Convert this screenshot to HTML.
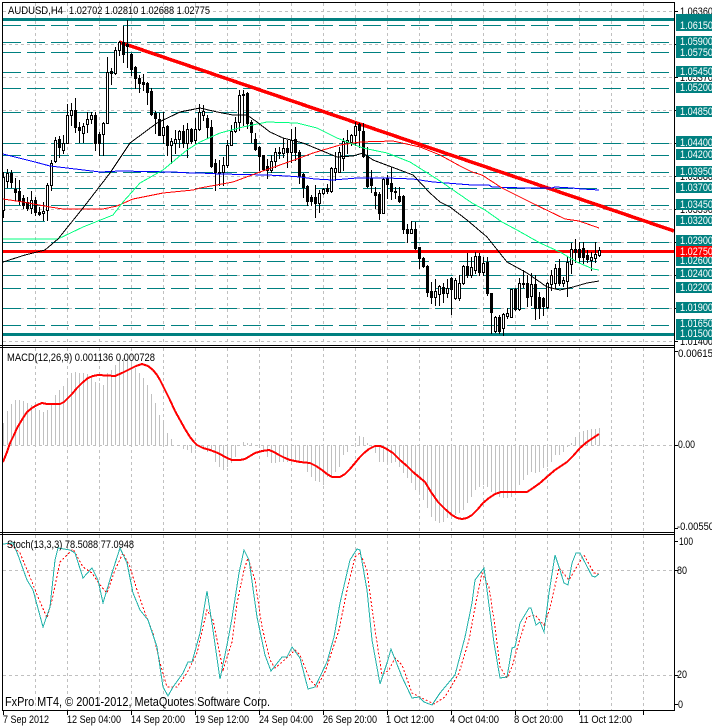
<!DOCTYPE html>
<html><head><meta charset="utf-8"><title>AUDUSD,H4</title>
<style>
html,body{margin:0;padding:0;background:#fff;width:712px;height:727px;overflow:hidden}
svg{display:block;shape-rendering:crispEdges}
text{font-family:"Liberation Sans",sans-serif;font-size:11px;fill:#000}
.w{fill:#fff}
</style></head><body>
<svg width="712" height="727" viewBox="0 0 712 727" xmlns="http://www.w3.org/2000/svg">
<rect width="712" height="727" fill="#fff"/>
<!-- grid -->
<g fill="none" stroke="#c0c0c0" stroke-dasharray="3 3">
<path d="M35.5 3V345M67.5 3V345M99.5 3V345M131.5 3V345M163.5 3V345M195.5 3V345M227.5 3V345M259.5 3V345M291.5 3V345M323.5 3V345M355.5 3V345M387.5 3V345M419.5 3V345M451.5 3V345M483.5 3V345M515.5 3V345M547.5 3V345M579.5 3V345M611.5 3V345M643.5 3V345"/>
<path d="M35.5 348V532M67.5 348V532M99.5 348V532M131.5 348V532M163.5 348V532M195.5 348V532M227.5 348V532M259.5 348V532M291.5 348V532M323.5 348V532M355.5 348V532M387.5 348V532M419.5 348V532M451.5 348V532M483.5 348V532M515.5 348V532M547.5 348V532M579.5 348V532M611.5 348V532M643.5 348V532"/>
<path d="M35.5 535V710M67.5 535V710M99.5 535V710M131.5 535V710M163.5 535V710M195.5 535V710M227.5 535V710M259.5 535V710M291.5 535V710M323.5 535V710M355.5 535V710M387.5 535V710M419.5 535V710M451.5 535V710M483.5 535V710M515.5 535V710M547.5 535V710M579.5 535V710M611.5 535V710M643.5 535V710"/>
<path d="M3 11.5H674M3 44.5H674M3 77.5H674M3 110.5H674M3 143.5H674M3 176.5H674M3 209.5H674M3 242.5H674M3 275.5H674M3 308.5H674M3 341.5H674M3 445.5H674M3 570.5H674M3 675.5H674"/>
</g>
<!-- levels -->
<path fill="none" stroke="#008080" stroke-dasharray="18 6" d="M3 25.5H674M3 42.5H674M3 52.5H674M3 72.5H674M3 88.5H674M3 112.5H674M3 143.5H674M3 155.5H674M3 172.5H674M3 188.5H674M3 205.5H674M3 221.5H674M3 242.5H674M3 261.5H674M3 275.5H674M3 288.5H674M3 308.5H674M3 325.5H674"/>
<rect x="3" y="18" width="671" height="3" fill="#008080"/>
<rect x="3" y="333" width="671" height="3" fill="#008080"/>
<rect x="3" y="250" width="671" height="3" fill="#f00"/>
<path d="M119 42L674 231" stroke="#f00" stroke-width="3.5" fill="none"/>
<!-- candles -->
<path fill="none" stroke="#000" d="M3.5 172V218M7.5 169V188M11.5 170V188M15.5 178V201M19.5 180V205M23.5 195V209M27.5 197V211M31.5 191V214M35.5 197V216M39.5 207V216M43.5 202V221M47.5 183V221M51.5 160V191M55.5 137V163M59.5 136V158M63.5 135V154M67.5 104V144M71.5 103V126M75.5 98V133M79.5 122V143M83.5 123V143M87.5 112V133M91.5 112V124M95.5 112V151M99.5 132V156M103.5 122V156M107.5 57V124M111.5 68V85M115.5 47V75M119.5 41V56M123.5 26V63M127.5 20V68M131.5 53V76M135.5 66V89M139.5 75V93M143.5 74V91M147.5 82V105M151.5 88V116M155.5 111V134M159.5 113V136M163.5 112V144M167.5 125V156M171.5 138V164M175.5 130V154M179.5 130V148M183.5 125V148M187.5 123V158M191.5 128V144M195.5 118V144M199.5 104V131M203.5 105V121M207.5 115V139M211.5 120V168M215.5 159V191M219.5 160V186M223.5 157V186M227.5 140V168M231.5 125V146M235.5 117V133M239.5 90V131M243.5 90V126M247.5 92V129M251.5 120V143M255.5 133V151M259.5 146V171M263.5 155V171M267.5 159V179M271.5 155V173M275.5 148V168M279.5 147V159M283.5 138V158M287.5 140V168M291.5 129V163M295.5 127V161M299.5 150V184M303.5 173V198M307.5 185V206M311.5 195V206M315.5 185V218M319.5 190V213M323.5 188V195M327.5 184V194M331.5 167V193M335.5 152V181M339.5 147V173M343.5 138V171M347.5 130V154M351.5 134V146M355.5 122V146M359.5 123V148M363.5 123V158M367.5 147V188M371.5 170V193M375.5 187V209M379.5 192V220M383.5 178V214M387.5 175V199M391.5 167V200M395.5 187V199M399.5 187V203M403.5 195V234M407.5 224V243M411.5 221V234M415.5 222V250M419.5 247V269M423.5 257V268M427.5 265V297M431.5 282V304M435.5 279V306M439.5 285V306M443.5 283V303M447.5 279V298M451.5 277V315M455.5 278V300M459.5 275V301M463.5 265V285M467.5 253V278M471.5 257V278M475.5 252V274M479.5 253V276M483.5 257V276M487.5 257V296M491.5 293V334M495.5 316V333M499.5 315V334M503.5 313V336M507.5 308V319M511.5 289V318M515.5 288V311M519.5 278V311M523.5 270V288M527.5 275V307M531.5 273V306M535.5 275V320M539.5 292V319M543.5 297V316M547.5 282V309M551.5 270V291M555.5 264V289M559.5 259V286M563.5 277V287M567.5 257V297M571.5 243V274M575.5 239V263M579.5 242V263M583.5 242V264M587.5 250V263M591.5 252V271M595.5 242V263M599.5 247V257"/>
<path fill="none" stroke="#000" stroke-width="3" d="M11.5 173V183M15.5 189V193M19.5 191V201M23.5 198V206M27.5 202V209M35.5 200V213M39.5 212V215M59.5 139V148M75.5 110V128M79.5 127V131M95.5 115V144M99.5 134V144M111.5 71V74M123.5 42V55M127.5 44V47M131.5 54V70M135.5 67V79M139.5 78V84M143.5 82V85M147.5 83V93M151.5 91V115M155.5 113V119M159.5 119V136M167.5 126V146M183.5 131V144M191.5 129V142M207.5 118V128M211.5 127V167M215.5 163V173M219.5 172V174M243.5 94V96M247.5 93V124M251.5 122V133M255.5 139V150M259.5 147V157M263.5 155V170M267.5 166V171M287.5 148V153M295.5 139V153M299.5 152V177M303.5 174V188M307.5 186V202M311.5 197V202M315.5 197V204M327.5 188V192M359.5 124V131M363.5 131V157M367.5 156V187M371.5 178V186M375.5 192V196M379.5 194V214M387.5 178V185M391.5 183V192M399.5 196V202M403.5 196V230M407.5 229V234M415.5 229V249M419.5 247V259M423.5 258V267M427.5 266V293M431.5 291V298M443.5 287V294M451.5 278V290M467.5 266V276M479.5 256V273M487.5 262V294M491.5 293V313M499.5 317V332M515.5 289V310M527.5 283V298M535.5 284V309M539.5 297V309M543.5 298V307M559.5 268V284M575.5 249V253M579.5 249V258M583.5 248V258M587.5 255V260"/>
<path fill="#fff" stroke="#000" d="M2.5 177.5h2V210.5h-2zM6.5 173.5h2V181.5h-2zM30.5 200.5h2V208.5h-2zM42.5 211.5h2V213.5h-2zM46.5 185.5h2V210.5h-2zM50.5 163.5h2V185.5h-2zM54.5 140.5h2V161.5h-2zM62.5 143.5h2V150.5h-2zM66.5 115.5h2V143.5h-2zM70.5 110.5h2V115.5h-2zM82.5 126.5h2V133.5h-2zM86.5 119.5h2V124.5h-2zM90.5 115.5h2V119.5h-2zM102.5 123.5h2V134.5h-2zM106.5 72.5h2V123.5h-2zM114.5 50.5h2V73.5h-2zM118.5 42.5h2V50.5h-2zM162.5 127.5h2V135.5h-2zM170.5 141.5h2V145.5h-2zM174.5 139.5h2V143.5h-2zM178.5 131.5h2V139.5h-2zM186.5 129.5h2V143.5h-2zM194.5 129.5h2V140.5h-2zM198.5 112.5h2V129.5h-2zM202.5 111.5h2V115.5h-2zM222.5 165.5h2V172.5h-2zM226.5 145.5h2V165.5h-2zM230.5 131.5h2V145.5h-2zM234.5 122.5h2V131.5h-2zM238.5 95.5h2V122.5h-2zM270.5 161.5h2V170.5h-2zM274.5 152.5h2V161.5h-2zM278.5 152.5h2V153.5h-2zM282.5 148.5h2V153.5h-2zM290.5 140.5h2V152.5h-2zM318.5 193.5h2V203.5h-2zM322.5 189.5h2V193.5h-2zM330.5 168.5h2V191.5h-2zM334.5 168.5h2V172.5h-2zM338.5 152.5h2V172.5h-2zM342.5 141.5h2V158.5h-2zM346.5 140.5h2V142.5h-2zM350.5 135.5h2V142.5h-2zM354.5 126.5h2V135.5h-2zM382.5 179.5h2V213.5h-2zM394.5 191.5h2V192.5h-2zM410.5 229.5h2V233.5h-2zM434.5 291.5h2V297.5h-2zM438.5 286.5h2V294.5h-2zM446.5 288.5h2V293.5h-2zM454.5 280.5h2V298.5h-2zM458.5 283.5h2V298.5h-2zM462.5 266.5h2V283.5h-2zM470.5 267.5h2V275.5h-2zM474.5 256.5h2V270.5h-2zM482.5 263.5h2V272.5h-2zM494.5 317.5h2V331.5h-2zM502.5 314.5h2V328.5h-2zM506.5 313.5h2V316.5h-2zM510.5 289.5h2V317.5h-2zM518.5 283.5h2V309.5h-2zM522.5 283.5h2V284.5h-2zM530.5 284.5h2V296.5h-2zM546.5 283.5h2V307.5h-2zM550.5 275.5h2V284.5h-2zM554.5 268.5h2V283.5h-2zM562.5 280.5h2V283.5h-2zM566.5 262.5h2V281.5h-2zM570.5 249.5h2V264.5h-2zM590.5 257.5h2V260.5h-2zM594.5 254.5h2V258.5h-2zM598.5 250.5h2V255.5h-2z"/>
<!-- moving averages -->
<g fill="none" stroke-width="1">
<polyline stroke="#00f" points="3,154 35,162 50,166 67,168 100,172 120,171 173,172 190,173 200,173 220,174 267,175 287,176 300,177 315,179 333,180 357,178 387,178 413,179 433,182 472,185 489,185 492,187 525,188 552,188 555,187 572,188 582,189 599,190"/>
<polyline stroke="#f00" points="3,199 23,202 50,207 63,209 103,209 117,206 133,199 163,193 193,190 200,188 233,182 260,172 297,159 313,153 340,145 360,142 393,141 420,147 440,155 460,166 472,172 482,175 502,188 532,203 565,219 579,221 599,228"/>
<polyline stroke="#00ff7f" points="3,239 37,239 58,239 83,227 113,215 123,202 140,183 163,170 187,150 200,142 220,133 243,127 267,122 297,123 317,128 337,138 363,148 387,153 410,162 440,181 472,203 485,210 502,222 517,230 540,243 560,252 577,262 593,269 599,270"/>
<polyline stroke="#000" points="3,262 25,255 45,250 58,239 83,208 110,173 130,143 157,123 180,112 200,108 217,112 233,115 247,115 257,122 270,132 283,138 303,143 320,150 337,157 353,156 363,153 373,160 397,169 413,175 430,193 440,202 450,207 467,220 487,237 507,262 527,273 547,287 560,290 573,287 587,283 599,281"/>
</g>
<!-- MACD histogram -->
<path fill="none" stroke="#c0c0c0" d="M3.5 445V423M7.5 445V411M11.5 445V404M15.5 445V400M19.5 445V400M23.5 445V401M27.5 445V403M31.5 445V405M35.5 445V408M39.5 445V410M43.5 445V412M47.5 445V410M51.5 445V405M55.5 445V395M59.5 445V390M63.5 445V386M67.5 445V378M71.5 445V373M75.5 445V372M79.5 445V373M83.5 445V373M87.5 445V374M91.5 445V378M95.5 445V382M99.5 445V383M103.5 445V385M107.5 445V373M111.5 445V370M115.5 445V365M119.5 445V360M123.5 445V358M127.5 445V360M131.5 445V363M135.5 445V368M139.5 445V373M143.5 445V378M147.5 445V385M151.5 445V394M155.5 445V403M159.5 445V415M163.5 445V422M167.5 445V433M171.5 445V439M175.5 445V445M183.5 445V449M187.5 445V450M191.5 445V453M195.5 445V449M199.5 445V447M203.5 445V448M207.5 445V452M211.5 445V450M215.5 445V462M219.5 445V467M223.5 445V470M227.5 445V467M231.5 445V463M235.5 445V457M243.5 445V442M247.5 445V443M251.5 445V443M259.5 445V448M263.5 445V452M267.5 445V457M271.5 445V463M275.5 445V463M279.5 445V462M283.5 445V462M287.5 445V462M291.5 445V460M295.5 445V462M299.5 445V462M303.5 445V463M307.5 445V472M311.5 445V477M315.5 445V481M319.5 445V482M323.5 445V485M327.5 445V477M331.5 445V477M335.5 445V472M339.5 445V467M343.5 445V455M347.5 445V452M355.5 445V443M359.5 445V436M363.5 445V437M367.5 445V443M371.5 445V448M375.5 445V453M379.5 445V462M383.5 445V462M387.5 445V462M391.5 445V463M395.5 445V462M399.5 445V467M403.5 445V473M407.5 445V478M411.5 445V483M415.5 445V490M419.5 445V495M423.5 445V500M427.5 445V508M431.5 445V517M435.5 445V521M439.5 445V523M443.5 445V522M447.5 445V518M451.5 445V517M455.5 445V515M459.5 445V513M463.5 445V510M467.5 445V503M471.5 445V497M475.5 445V490M479.5 445V487M483.5 445V485M487.5 445V487M491.5 445V492M495.5 445V495M499.5 445V497M503.5 445V498M507.5 445V498M511.5 445V497M515.5 445V493M519.5 445V485M523.5 445V480M527.5 445V475M531.5 445V472M535.5 445V473M539.5 445V472M543.5 445V468M547.5 445V467M551.5 445V462M555.5 445V455M559.5 445V455M563.5 445V452M567.5 445V447M571.5 445V443M575.5 445V437M579.5 445V433M583.5 445V431M587.5 445V430M591.5 445V429M595.5 445V429M599.5 445V428"/>
<polyline fill="none" stroke="#f00" stroke-width="2" stroke-linejoin="round" points="3,462 7,452 10,443 14,435 17,428 23,418 27,412 32,408 37,405 42,403 47,404 60,404 64,402 67,399 72,394 77,388 82,383 88,378 93,376 98,375 115,376 122,373 130,369 136,366 142,364 148,366 153,370 157,375 160,380 165,390 170,400 175,411 180,420 185,429 190,437 194,442 197,445 203,448 210,450 218,453 227,458 232,460 240,460 245,459 250,456 255,453 262,451 269,450 274,452 279,455 285,458 290,460 300,462 310,463 316,466 322,470 327,474 332,477 340,477 345,474 350,469 355,463 360,457 364,453 369,449 375,446 380,446 385,448 393,453 400,460 407,466 413,472 419,477 425,482 431,492 438,502 445,509 452,515 457,518 462,519 467,518 472,515 478,509 483,503 489,498 495,494 501,492 507,492 515,492 527,492 533,488 540,483 548,476 555,470 561,466 567,462 573,456 580,448 587,442 593,438 599,434"/>
<!-- Stochastic -->
<polyline fill="none" stroke="#f00" stroke-dasharray="2 2" points="3,544 10,544 20,553 30,577 38,597 47,618 52,600 60,562 73,549 83,567 92,573 100,585 107,593 115,570 123,553 130,567 137,590 145,613 153,633 160,663 167,687 177,687 187,673 197,653 207,610 213,620 223,670 232,642 237,603 244,570 248,558 255,580 262,627 270,660 275,668 289,656 295,650 300,655 310,680 317,687 325,672 339,630 347,590 355,557 360,553 367,570 374,623 382,675 389,670 395,658 402,665 412,693 422,698 434,704 445,697 459,673 469,640 476,602 482,573 489,587 494,620 500,667 507,678 512,667 519,642 527,617 535,615 544,625 550,608 559,568 569,580 579,563 584,555 594,573 599,574"/>
<polyline fill="none" stroke="#20b2aa" stroke-width="1" points="3,544 13,543 18,555 27,580 33,590 43,627 50,607 55,560 58,548 70,550 75,553 83,578 92,568 98,580 103,603 112,573 120,548 127,563 133,593 140,610 148,620 157,647 163,687 168,696 173,687 183,673 188,662 192,662 200,633 207,591 213,630 220,679 228,640 232,618 239,573 244,550 249,560 257,617 265,655 271,671 282,657 287,657 292,647 300,658 308,689 315,687 327,662 334,637 340,603 350,560 357,549 360,550 367,590 372,640 380,684 387,663 391,649 402,677 412,698 419,697 424,702 432,705 440,693 455,675 465,637 472,603 475,580 484,568 487,590 494,643 500,678 507,677 512,648 515,647 520,623 529,608 531,608 536,625 540,622 544,632 549,593 555,555 559,567 564,583 568,585 572,563 576,553 580,553 592,576 595,577 599,574"/>
<!-- frames -->
<path fill="none" stroke="#000" d="M2.5 2V711M2 2.5H675M674.5 2V711M0 345.5H675M0 347.5H675M0 532.5H675M0 534.5H675M2 710.5H675"/>
<path fill="none" stroke="#000" d="M675 11.5h3M675 44.5h3M675 77.5h3M675 110.5h3M675 143.5h3M675 176.5h3M675 209.5h3M675 242.5h3M675 275.5h3M675 308.5h3M675 341.5h3M675 445.5h3M675 351.5h3M675 528.5h3M675 541.5h3M675 570.5h3M675 675.5h3M675 704.5h3M3.5 711v4M67.5 711v4M131.5 711v4M195.5 711v4M259.5 711v4M323.5 711v4M387.5 711v4M451.5 711v4M515.5 711v4M579.5 711v4M643.5 711v4"/>
<!-- axis text hidden/behind labels -->
<text x="680" y="15" textLength="33" lengthAdjust="spacingAndGlyphs">1.06360</text>
<text x="680" y="81" textLength="33" lengthAdjust="spacingAndGlyphs">1.05370</text>
<text x="680" y="180" textLength="33" lengthAdjust="spacingAndGlyphs">1.03880</text>
<text x="680" y="213" textLength="33" lengthAdjust="spacingAndGlyphs">1.03390</text>
<text x="680" y="345" textLength="33" lengthAdjust="spacingAndGlyphs">1.01400</text>
<!-- price labels -->
<g fill="#008080"><rect x="676" y="14" width="36" height="6"/><rect x="676" y="20" width="36" height="11"/><rect x="676" y="36" width="36" height="11"/><rect x="676" y="47" width="36" height="11"/><rect x="676" y="66" width="36" height="11"/><rect x="676" y="82" width="36" height="11"/><rect x="676" y="106" width="36" height="11"/><rect x="676" y="136" width="36" height="11"/><rect x="676" y="149" width="36" height="11"/><rect x="676" y="166" width="36" height="11"/><rect x="676" y="182" width="36" height="11"/><rect x="676" y="199" width="36" height="11"/><rect x="676" y="215" width="36" height="11"/><rect x="676" y="235" width="36" height="11"/><rect x="676" y="255" width="36" height="11"/><rect x="676" y="268" width="36" height="11"/><rect x="676" y="282" width="36" height="11"/><rect x="676" y="302" width="36" height="11"/><rect x="676" y="319" width="36" height="11"/><rect x="676" y="329" width="36" height="11"/></g>
<rect x="676" y="246" width="36" height="11" fill="#f00"/>
<g>
<text class="w" x="680" y="29" textLength="33" lengthAdjust="spacingAndGlyphs">1.06150</text>
<text class="w" x="680" y="45" textLength="33" lengthAdjust="spacingAndGlyphs">1.05900</text>
<text class="w" x="680" y="56" textLength="33" lengthAdjust="spacingAndGlyphs">1.05750</text>
<text class="w" x="680" y="75" textLength="33" lengthAdjust="spacingAndGlyphs">1.05450</text>
<text class="w" x="680" y="91" textLength="33" lengthAdjust="spacingAndGlyphs">1.05200</text>
<text class="w" x="680" y="115" textLength="33" lengthAdjust="spacingAndGlyphs">1.04850</text>
<text class="w" x="680" y="146" textLength="33" lengthAdjust="spacingAndGlyphs">1.04400</text>
<text class="w" x="680" y="158" textLength="33" lengthAdjust="spacingAndGlyphs">1.04200</text>
<text class="w" x="680" y="175" textLength="33" lengthAdjust="spacingAndGlyphs">1.03950</text>
<text class="w" x="680" y="191" textLength="33" lengthAdjust="spacingAndGlyphs">1.03700</text>
<text class="w" x="680" y="208" textLength="33" lengthAdjust="spacingAndGlyphs">1.03450</text>
<text class="w" x="680" y="224" textLength="33" lengthAdjust="spacingAndGlyphs">1.03200</text>
<text class="w" x="680" y="244" textLength="33" lengthAdjust="spacingAndGlyphs">1.02900</text>
<text class="w" x="680" y="255" textLength="33" lengthAdjust="spacingAndGlyphs">1.02750</text>
<text class="w" x="680" y="264" textLength="33" lengthAdjust="spacingAndGlyphs">1.02600</text>
<text class="w" x="680" y="277" textLength="33" lengthAdjust="spacingAndGlyphs">1.02400</text>
<text class="w" x="680" y="291" textLength="33" lengthAdjust="spacingAndGlyphs">1.02200</text>
<text class="w" x="680" y="311" textLength="33" lengthAdjust="spacingAndGlyphs">1.01900</text>
<text class="w" x="680" y="327" textLength="33" lengthAdjust="spacingAndGlyphs">1.01650</text>
<text class="w" x="680" y="337" textLength="33" lengthAdjust="spacingAndGlyphs">1.01500</text>
</g>
<!-- panel titles -->
<text x="8" y="14" textLength="55" lengthAdjust="spacingAndGlyphs">AUDUSD,H4</text>
<text x="69" y="14" textLength="141" lengthAdjust="spacingAndGlyphs">1.02702 1.02810 1.02688 1.02775</text>
<text x="7" y="361" textLength="148" lengthAdjust="spacingAndGlyphs">MACD(12,26,9) 0.001136 0.000728</text>
<text x="7" y="548" textLength="127" lengthAdjust="spacingAndGlyphs">Stoch(13,3,3) 78.5088 77.0948</text>
<text x="5" y="706" textLength="265" lengthAdjust="spacingAndGlyphs" style="font-size:13px">FxPro MT4, © 2001-2012, MetaQuotes Software Corp.</text>
<!-- indicator axes -->
<text x="678" y="357" textLength="35" lengthAdjust="spacingAndGlyphs">0.00615</text>
<text x="678" y="448" textLength="17" lengthAdjust="spacingAndGlyphs">0.00</text>
<text x="677" y="530" textLength="37" lengthAdjust="spacingAndGlyphs">-0.00550</text>
<text x="679" y="545" textLength="14" lengthAdjust="spacingAndGlyphs">100</text>
<text x="677" y="574" textLength="10" lengthAdjust="spacingAndGlyphs">80</text>
<text x="677" y="678" textLength="10" lengthAdjust="spacingAndGlyphs">20</text>
<text x="678" y="708" textLength="5" lengthAdjust="spacingAndGlyphs">0</text>
<!-- time axis -->
<text x="3" y="723" textLength="46" lengthAdjust="spacingAndGlyphs">7 Sep 2012</text>
<text x="67" y="723" textLength="54" lengthAdjust="spacingAndGlyphs">12 Sep 04:00</text>
<text x="131" y="723" textLength="54" lengthAdjust="spacingAndGlyphs">14 Sep 20:00</text>
<text x="195" y="723" textLength="54" lengthAdjust="spacingAndGlyphs">19 Sep 12:00</text>
<text x="259" y="723" textLength="54" lengthAdjust="spacingAndGlyphs">24 Sep 04:00</text>
<text x="323" y="723" textLength="54" lengthAdjust="spacingAndGlyphs">26 Sep 20:00</text>
<text x="386" y="723" textLength="48" lengthAdjust="spacingAndGlyphs">1 Oct 12:00</text>
<text x="450" y="723" textLength="49" lengthAdjust="spacingAndGlyphs">4 Oct 04:00</text>
<text x="514" y="723" textLength="49" lengthAdjust="spacingAndGlyphs">8 Oct 20:00</text>
<text x="579" y="723" textLength="53" lengthAdjust="spacingAndGlyphs">11 Oct 12:00</text>
</svg>
</body></html>
